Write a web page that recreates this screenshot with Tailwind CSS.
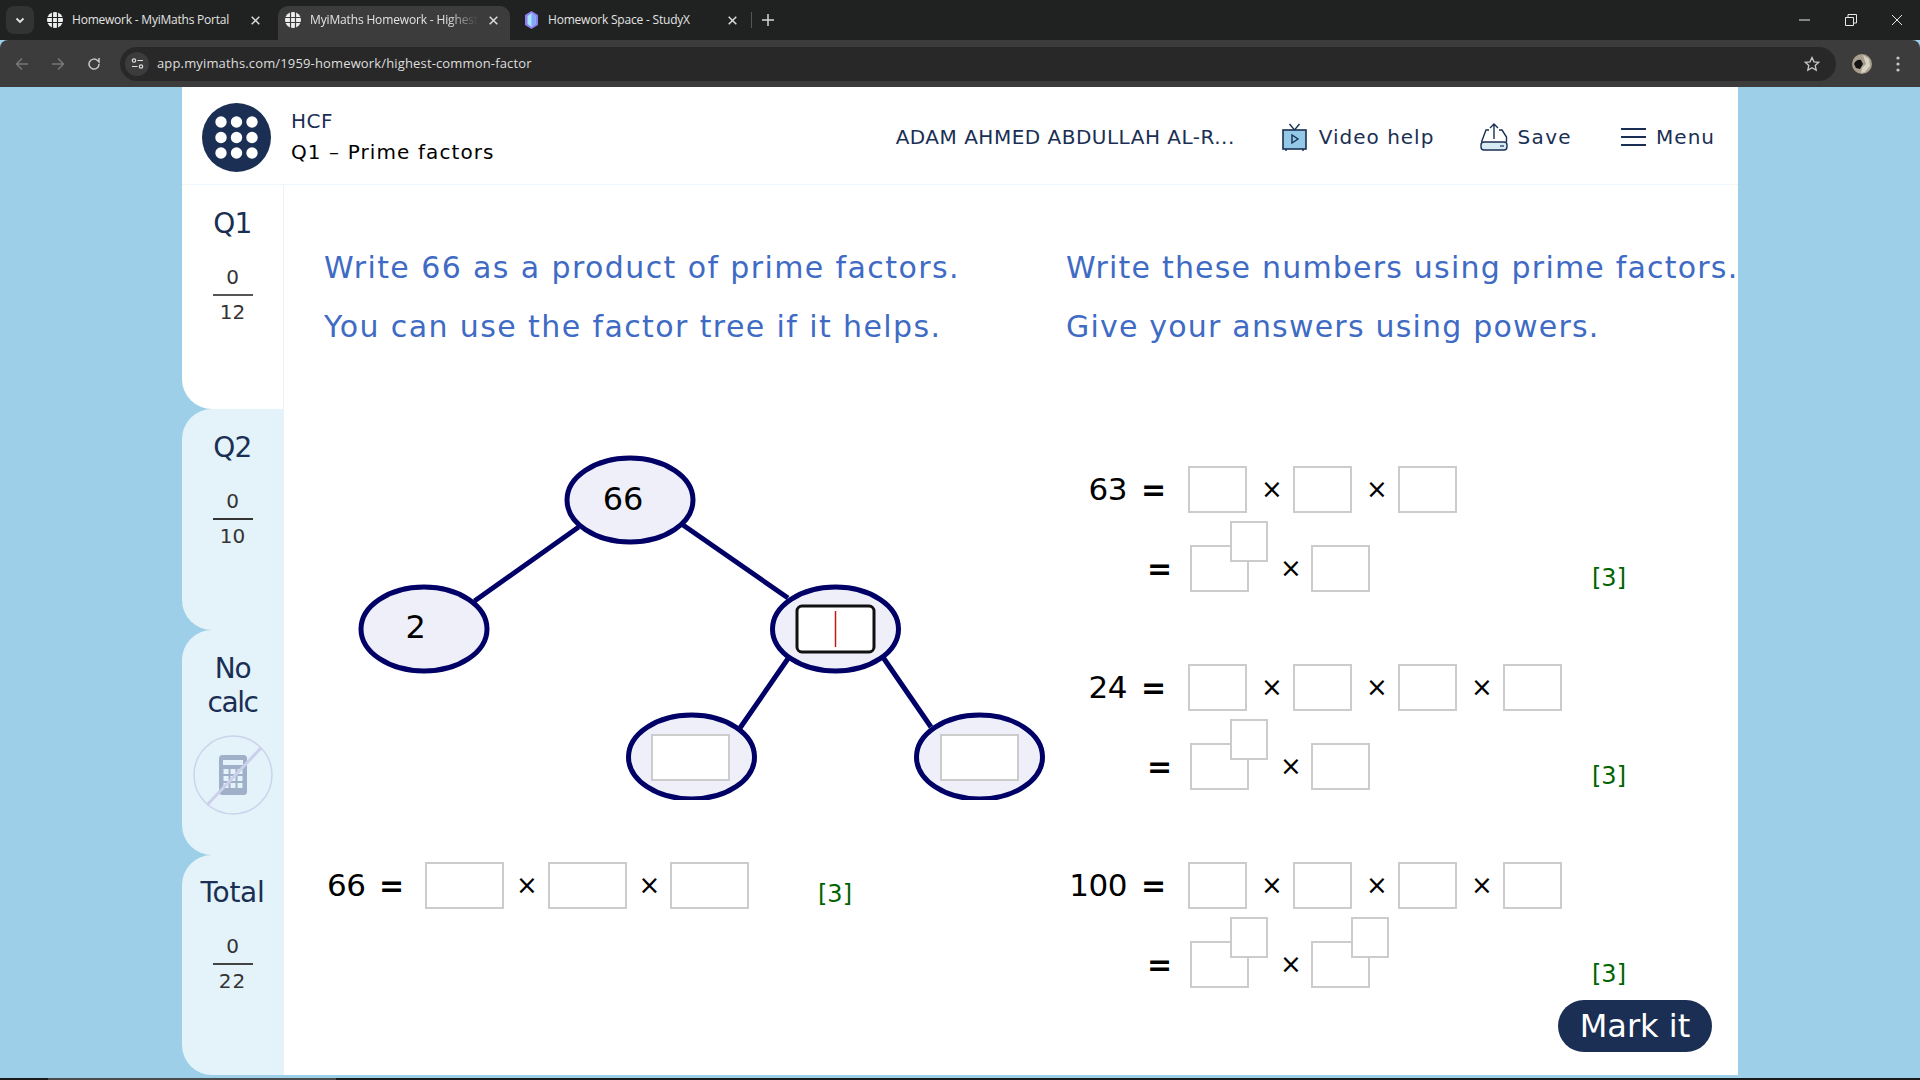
<!DOCTYPE html>
<html lang="en">
  <head>
    <meta charset="UTF-8" />
    <meta name="viewport" content="width=device-width, initial-scale=1.0" />
    <script src="https://cdn.jsdelivr.net/npm/@tailwindcss/browser@4"></script>
    <title>MyiMaths Homework - Highest Common Factor</title>
  </head>
  <body class="h-screen w-screen overflow-hidden bg-[#9dd0e8] font-['DejaVu_Sans',sans-serif]">
    <!-- Browser tabs -->
    <div class="h-[40px] bg-[#202221] flex items-start pt-[6px] pl-[6px] font-['Open_Sans',sans-serif] text-[12px] text-[#e3e3e3] relative">
      <div class="w-[28px] h-[28px] rounded-[8px] bg-[#323433] flex items-center justify-center">
        <svg width="12" height="12" viewBox="0 0 12 12" fill="none" stroke="#e3e3e3" stroke-width="1.8"><path d="M2.5 4.5 6 8l3.500-3.500" /></svg>
      </div>
      <div class="w-[244px] h-[28px] flex items-center pl-[13px]">
        <svg width="16" height="16" viewBox="0 0 16 16" class="shrink-0"><circle cx="8" cy="8" r="8" fill="#eee" /><path d="M0 5.500h16M0 10.500h16M5.500 0v16M10.500 0v16" stroke="#202221" stroke-width="1.200" /></svg>
        <span class="ml-[9px] w-[168px] whitespace-nowrap tracking-[-0.22px]">Homework - MyiMaths Portal</span>
        <svg width="9" height="9" viewBox="0 0 9 9" fill="none" stroke="#dcdcdc" stroke-width="1.500" class="ml-[11px]"><path d="M.7.7l7.600 7.600M8.300.7.700 8.300" /></svg>
      </div>
      <div class="w-[232px] h-[34px] bg-[#3c3c3c] rounded-t-[10px] flex items-center pl-[7px] pb-[6px]">
        <svg width="16" height="16" viewBox="0 0 16 16" class="shrink-0"><circle cx="8" cy="8" r="8" fill="#eee" /><path d="M0 5.500h16M0 10.500h16M5.500 0v16M10.500 0v16" stroke="#3c3c3c" stroke-width="1.200" /></svg>
        <span class="ml-[9px] w-[168px] overflow-hidden whitespace-nowrap tracking-[-0.15px] [mask-image:linear-gradient(to_right,black_82%,transparent)]">MyiMaths Homework - Highest</span>
        <svg width="9" height="9" viewBox="0 0 9 9" fill="none" stroke="#dcdcdc" stroke-width="1.500" class="ml-[11px]"><path d="M.7.7l7.600 7.600M8.300.7.700 8.300" /></svg>
      </div>
      <div class="w-[242px] h-[28px] flex items-center pl-[14px]">
        <svg width="15" height="18" viewBox="0 0 15 18" class="shrink-0">
          <path d="M7.500 0 14 4v10l-6.500 4L1 14V4Z" fill="#8f7df0" />
          <path d="M7.500 2 11.500 5v8l-4 3-4-3V5Z" fill="#a8e3fa" />
          <path d="M7.500 2 11.500 5v8l-4 3Z" fill="#7fa8f5" />
        </svg>
        <span class="ml-[9px] w-[140px] whitespace-nowrap tracking-[-0.2px]">Homework Space - StudyX</span>
        <svg width="9" height="9" viewBox="0 0 9 9" fill="none" stroke="#dcdcdc" stroke-width="1.500" class="ml-[40px] shrink-0"><path d="M.7.7l7.600 7.600M8.300.7.700 8.300" /></svg>
        <span class="ml-[14px] w-px h-[16px] bg-[#555] shrink-0"></span>
      </div>
      <svg width="12" height="12" viewBox="0 0 12 12" class="mt-[8px] ml-[10px]"><path d="M6 0v12M0 6h12" stroke="#d5d5d5" stroke-width="1.500" /></svg>
      <!-- Window controls -->
      <div class="ml-auto flex items-center h-[28px] gap-[34px] pr-[17px]">
        <svg width="12" height="12" viewBox="0 0 12 12"><path d="M0 6h11" stroke="#e8e8e8" /></svg>
        <svg width="12" height="12" viewBox="0 0 12 12" fill="none" stroke="#e8e8e8"><path d="M.5 3.500h8v8h-8zM3 3V.5h8.500V9H9" /></svg>
        <svg width="12" height="12" viewBox="0 0 12 12" fill="none" stroke="#e8e8e8"><path d="M1 1l10 10M11 1 1 11" /></svg>
      </div>
    </div>

    <!-- Browser toolbar -->
    <div class="h-[47px] bg-[#3c3c3c] rounded-t-[8px] flex items-center font-['Open_Sans',sans-serif]">
      <div class="w-[120px] flex items-center pl-[14px] gap-[20px] shrink-0">
        <svg width="16" height="16" viewBox="0 0 16 16" fill="none" stroke="#777" stroke-width="1.500"><path d="M14 8H2.500M8 2.500 2.500 8 8 13.500" /></svg>
        <svg width="16" height="16" viewBox="0 0 16 16" fill="none" stroke="#777" stroke-width="1.500"><path d="M2 8h11.500M8 2.500 13.500 8 8 13.500" /></svg>
        <svg width="16" height="16" viewBox="0 0 16 16" fill="none" stroke="#c7c7c7" stroke-width="1.500"><path d="M13 8a5 5 0 1 1-1.500-3.500L13 6V2" /></svg>
      </div>
      <div class="w-[1716px] h-[34px] rounded-full bg-[#282828] flex items-center pl-[5px] shrink-0">
        <div class="w-[24px] h-[24px] rounded-full bg-[#3c3c3c] flex items-center justify-center">
          <svg width="13" height="13" viewBox="0 0 13 13" fill="none" stroke="#ddd" stroke-width="1.200"><circle cx="3" cy="3.500" r="1.700" /><path d="M6.500 3.500H12M1 9.500h5.500" /><circle cx="10" cy="9.500" r="1.700" /></svg>
        </div>
        <span class="ml-[8px] text-[13px] text-[#dedede] tracking-[0.15px]">app.myimaths.com/1959-homework/highest-common-factor</span>
        <svg width="16" height="16" viewBox="0 0 16 16" fill="none" stroke="#c7c7c7" stroke-width="1.300" class="ml-auto mr-[16px]"><path d="m8 1.500 2 4.300 4.700.5-3.500 3.200 1 4.600L8 11.700l-4.200 2.400 1-4.600L1.300 6.300 6 5.800Z" /></svg>
      </div>
      <svg width="20" height="20" viewBox="0 0 20 20" class="ml-[16px]">
        <circle cx="10" cy="10" r="10" fill="#a89f8e" />
        <path d="M2 10c1-3 4-5 7-4l2 4-3 5-4-1Z" fill="#141414" />
        <path d="M11 1l6 4 1 7-5 6-4 1 1-5 4-4Z" fill="#d8d2c4" />
      </svg>
      <svg width="4" height="16" viewBox="0 0 4 16" fill="#c7c7c7" class="ml-[24px]"><circle cx="2" cy="2" r="1.600" /><circle cx="2" cy="8" r="1.600" /><circle cx="2" cy="14" r="1.600" /></svg>
    </div>

    <!-- Page -->
    <div class="w-[1556px] h-[988px] ml-[182px] flex flex-col overflow-hidden">
      <header class="h-[98px] shrink-0 bg-white border-b border-[#eef6fb] flex items-center pl-[20px] pt-[3px]">
        <svg width="69" height="69" viewBox="0 0 69 69" class="shrink-0">
          <circle cx="34.500" cy="34.500" r="34.500" fill="#1a2f53" />
          <g fill="#fff">
            <circle cx="19" cy="19" r="5.700" /><circle cx="34.500" cy="19" r="5.700" /><circle cx="50" cy="19" r="5.700" />
            <circle cx="19" cy="34.500" r="5.700" /><circle cx="34.500" cy="34.500" r="5.700" /><circle cx="50" cy="34.500" r="5.700" />
            <circle cx="19" cy="50" r="5.700" /><circle cx="34.500" cy="50" r="5.700" /><circle cx="50" cy="50" r="5.700" />
          </g>
        </svg>
        <div class="ml-[20px] flex flex-col text-[20px] leading-[31px]">
          <span class="text-[#1a2f53] tracking-[0.5px]">HCF</span>
          <span class="text-black tracking-[1.1px]">Q1 – Prime factors</span>
        </div>
        <div class="ml-auto flex items-center text-[20px] text-[#1a2f53] pr-[23px]">
          <span class="tracking-[0.5px]">ADAM AHMED ABDULLAH AL-R...</span>
          <svg width="25" height="28" viewBox="0 0 25 28" class="ml-[47px]" fill="none">
            <path d="M7.500 1 12.500 7 17.500 1" stroke="#1a2f53" stroke-width="1.400" />
            <rect x="1" y="7" width="23" height="19" fill="#93c9e6" stroke="#1a2f53" stroke-width="1.600" />
            <path d="M10 12v8l6-4Z" stroke="#1a2f53" stroke-width="1.400" />
            <path d="M4 26v2M21 26v2" stroke="#1a2f53" stroke-width="1.400" />
          </svg>
          <span class="ml-[12px] tracking-[1px]">Video help</span>
          <svg width="28" height="28" viewBox="0 0 28 28" class="ml-[46px]" fill="none" stroke="#1a2f53" stroke-width="1.400">
            <path d="M14 16V1M10 5l4-4 4 4" />
            <path d="M9 7H6L1.500 19M19 7h3l4.500 7v5" />
            <rect x="1" y="19" width="26" height="8" rx="3" fill="#d8ebf5" />
            <path d="M20 23h4" stroke-width="1.200" />
          </svg>
          <span class="ml-[9px] tracking-[1.4px]">Save</span>
          <svg width="25" height="20" viewBox="0 0 25 20" class="ml-[49px]" fill="none" stroke="#1a2f53" stroke-width="2"><path d="M0 2h25M0 10h25M0 18h25" /></svg>
          <span class="ml-[10px] tracking-[1px]">Menu</span>
        </div>
      </header>

      <div class="flex flex-1 min-h-0">
        <!-- Question tabs -->
        <nav class="w-[102px] shrink-0 flex flex-col text-center text-[#1a2f53] border-r border-[#e6f3fa]">
          <div class="h-[224px] bg-white rounded-bl-[30px] pt-[23px]">
            <div class="text-[28px] leading-[32px] tracking-[-0.8px]">Q1</div>
            <div class="mt-[25px] text-[20px] leading-[24px] text-[#333]">0</div>
            <div class="mx-auto mt-[5px] w-[40px] h-[2px] bg-[#555]"></div>
            <div class="mt-[4px] text-[20px] leading-[24px] text-[#333]">12</div>
          </div>
          <div class="h-[221px] bg-[#e4f2f9] rounded-l-[30px] pt-[23px]">
            <div class="text-[28px] leading-[32px] tracking-[-0.8px]">Q2</div>
            <div class="mt-[25px] text-[20px] leading-[24px] text-[#333]">0</div>
            <div class="mx-auto mt-[5px] w-[40px] h-[2px] bg-[#333]"></div>
            <div class="mt-[4px] text-[20px] leading-[24px] text-[#333]">10</div>
          </div>
          <div class="h-[225px] bg-[#e4f2f9] rounded-l-[30px] pt-[22px]">
            <div class="text-[28px] leading-[34px] tracking-[-1.4px]">No<br />calc</div>
            <svg width="80" height="80" viewBox="0 0 80 80" class="mx-auto mt-[15px]">
              <circle cx="40" cy="40" r="39" fill="none" stroke="#ccd3ec" stroke-width="1.500" />
              <rect x="26" y="20" width="28" height="40" rx="3.500" fill="#9fb0c8" />
              <rect x="30" y="25" width="20" height="5" fill="#e4f2f9" />
              <g fill="#e4f2f9">
                <rect x="30.500" y="34" width="5" height="5" /><rect x="37.500" y="34" width="5" height="5" /><rect x="44.500" y="34" width="5" height="5" />
                <rect x="30.500" y="41" width="5" height="5" /><rect x="37.500" y="41" width="5" height="5" /><rect x="44.500" y="41" width="5" height="5" />
                <rect x="30.500" y="48" width="5" height="5" /><rect x="37.500" y="48" width="5" height="5" /><rect x="44.500" y="48" width="5" height="5" />
              </g>
              <path d="M68 13 14 70" stroke="#ccd0ec" stroke-width="3" />
            </svg>
          </div>
          <div class="h-[220px] bg-[#e4f2f9] rounded-l-[30px] pt-[22px]">
            <div class="text-[28px] leading-[32px] tracking-[-0.3px]">Total</div>
            <div class="mt-[25px] text-[20px] leading-[24px] text-[#333]">0</div>
            <div class="mx-auto mt-[5px] w-[40px] h-[2px] bg-[#444]"></div>
            <div class="mt-[4px] text-[20px] leading-[24px] text-[#333] tracking-[1px]">22</div>
          </div>
        </nav>

        <main class="flex-1 min-w-0 bg-white flex overflow-hidden text-black">
          <!-- Left question -->
          <section class="w-[782px] shrink-0">
            <div class="pt-[53px] pl-[40px] text-[30px] leading-[59px] tracking-[1.4px] text-[#3f6bc4] whitespace-nowrap">
              <p>Write 66 as a product of prime factors.</p>
              <p>You can use the factor tree if it helps.</p>
            </div>
            <svg width="710" height="360" viewBox="0 0 710 360" class="mt-[84px] ml-[66px]" fill="#eeeff8" stroke="#000066" stroke-width="5">
              <path d="M228.700 87 124.500 161M333 85 438 158M438.400 218 390 288M533.500 218 581 287" fill="none" />
              <ellipse cx="280" cy="60" rx="63" ry="42" />
              <ellipse cx="74" cy="189" rx="63" ry="42" />
              <ellipse cx="485.500" cy="189" rx="63" ry="42" />
              <ellipse cx="341.500" cy="317" rx="63" ry="42" />
              <ellipse cx="629.500" cy="317" rx="63" ry="42" />
              <text x="273" y="70" text-anchor="middle" font-size="32" fill="#000" stroke="none">66</text>
              <text x="65.700" y="198" text-anchor="middle" font-size="32" fill="#000" stroke="none">2</text>
              <rect x="447" y="166" width="77" height="46" rx="5" fill="#fff" stroke="#111" stroke-width="3" />
              <path d="M485.500 171v36" stroke="#c01818" stroke-width="1.500" />
              <rect x="302" y="295" width="77" height="45" fill="#fff" stroke="#ccc" stroke-width="2" />
              <rect x="591" y="295" width="77" height="45" fill="#fff" stroke="#ccc" stroke-width="2" />
            </svg>
            <div class="mt-[62px] ml-[43px] flex items-center h-[47px] text-[31px]">
              <span class="w-[52px] tracking-[-0.5px]">66</span>
              <span class="w-[46px] font-bold text-[30px]">=</span>
              <span class="w-[79px] h-[47px] border-2 border-[#ccc] bg-white"></span>
              <span class="w-[44px] pl-[2px] text-center text-[26px]">×</span>
              <span class="w-[79px] h-[47px] border-2 border-[#ccc] bg-white"></span>
              <span class="w-[43px] pl-[2px] text-center text-[26px]">×</span>
              <span class="w-[79px] h-[47px] border-2 border-[#ccc] bg-white"></span>
              <span class="ml-[69px] mt-[17px] text-[24px] text-[#006400]">[3]</span>
            </div>
          </section>

          <!-- Right question -->
          <section class="flex-1 min-w-0 flex flex-col">
            <div class="pt-[53px] text-[30px] leading-[59px] tracking-[1.2px] text-[#3f6bc4] whitespace-nowrap">
              <p>Write these numbers using prime factors.</p>
              <p>Give your answers using powers.</p>
            </div>

            <!-- 63 -->
            <div class="mt-[110px] w-[560px]">
              <div class="flex items-center h-[47px] text-[31px]">
                <span class="w-[61px] text-right tracking-[-0.5px]">63</span>
                <span class="ml-[14px] w-[47px] font-bold text-[30px]">=</span>
                <span class="w-[59px] h-[47px] border-2 border-[#ccc]"></span>
                <span class="w-[46px] pl-[4px] text-center text-[26px]">×</span>
                <span class="w-[59px] h-[47px] border-2 border-[#ccc]"></span>
                <span class="w-[46px] pl-[4px] text-center text-[26px]">×</span>
                <span class="w-[59px] h-[47px] border-2 border-[#ccc]"></span>
              </div>
              <div class="mt-[32px] flex items-center h-[47px] text-[31px]">
                <span class="ml-[81px] w-[43px] font-bold text-[30px]">=</span>
                <span class="relative w-[59px] h-[47px] border-2 border-[#ccc]">
                  <span class="absolute left-[38px] -top-[26px] w-[38px] h-[41px] border-2 border-[#ccc] bg-white"></span>
                </span>
                <span class="w-[62px] pl-[31px] text-[26px]">×</span>
                <span class="w-[59px] h-[47px] border-2 border-[#ccc]"></span>
                <span class="ml-auto mt-[18px] text-[24px] text-[#006400]">[3]</span>
              </div>
            </div>

            <!-- 24 -->
            <div class="mt-[72px] w-[560px]">
              <div class="flex items-center h-[47px] text-[31px]">
                <span class="w-[61px] text-right tracking-[-0.5px]">24</span>
                <span class="ml-[14px] w-[47px] font-bold text-[30px]">=</span>
                <span class="w-[59px] h-[47px] border-2 border-[#ccc]"></span>
                <span class="w-[46px] pl-[4px] text-center text-[26px]">×</span>
                <span class="w-[59px] h-[47px] border-2 border-[#ccc]"></span>
                <span class="w-[46px] pl-[4px] text-center text-[26px]">×</span>
                <span class="w-[59px] h-[47px] border-2 border-[#ccc]"></span>
                <span class="w-[46px] pl-[4px] text-center text-[26px]">×</span>
                <span class="w-[59px] h-[47px] border-2 border-[#ccc]"></span>
              </div>
              <div class="mt-[32px] flex items-center h-[47px] text-[31px]">
                <span class="ml-[81px] w-[43px] font-bold text-[30px]">=</span>
                <span class="relative w-[59px] h-[47px] border-2 border-[#ccc]">
                  <span class="absolute left-[38px] -top-[26px] w-[38px] h-[41px] border-2 border-[#ccc] bg-white"></span>
                </span>
                <span class="w-[62px] pl-[31px] text-[26px]">×</span>
                <span class="w-[59px] h-[47px] border-2 border-[#ccc]"></span>
                <span class="ml-auto mt-[18px] text-[24px] text-[#006400]">[3]</span>
              </div>
            </div>

            <!-- 100 -->
            <div class="mt-[72px] w-[560px]">
              <div class="flex items-center h-[47px] text-[31px]">
                <span class="w-[61px] text-right tracking-[-0.5px]">100</span>
                <span class="ml-[14px] w-[47px] font-bold text-[30px]">=</span>
                <span class="w-[59px] h-[47px] border-2 border-[#ccc]"></span>
                <span class="w-[46px] pl-[4px] text-center text-[26px]">×</span>
                <span class="w-[59px] h-[47px] border-2 border-[#ccc]"></span>
                <span class="w-[46px] pl-[4px] text-center text-[26px]">×</span>
                <span class="w-[59px] h-[47px] border-2 border-[#ccc]"></span>
                <span class="w-[46px] pl-[4px] text-center text-[26px]">×</span>
                <span class="w-[59px] h-[47px] border-2 border-[#ccc]"></span>
              </div>
              <div class="mt-[32px] flex items-center h-[47px] text-[31px]">
                <span class="ml-[81px] w-[43px] font-bold text-[30px]">=</span>
                <span class="relative w-[59px] h-[47px] border-2 border-[#ccc]">
                  <span class="absolute left-[38px] -top-[26px] w-[38px] h-[41px] border-2 border-[#ccc] bg-white"></span>
                </span>
                <span class="w-[62px] pl-[31px] text-[26px]">×</span>
                <span class="relative w-[59px] h-[47px] border-2 border-[#ccc]">
                  <span class="absolute left-[38px] -top-[26px] w-[38px] h-[41px] border-2 border-[#ccc] bg-white"></span>
                </span>
                <span class="ml-auto mt-[18px] text-[24px] text-[#006400]">[3]</span>
              </div>
            </div>

            <button class="self-end mr-[26px] mt-[12px] w-[154px] h-[52px] rounded-[26px] bg-[#1a2f53] text-white text-[32px] leading-none">Mark it</button>
          </section>
        </main>
      </div>
    </div>

    <!-- Taskbar edge -->
    <div class="mt-[3px] h-[2px] bg-[#1a1a1a]">
      <div class="ml-[48px] w-[288px] h-full bg-[#4a4a4a]"></div>
    </div>
  </body>
</html>
